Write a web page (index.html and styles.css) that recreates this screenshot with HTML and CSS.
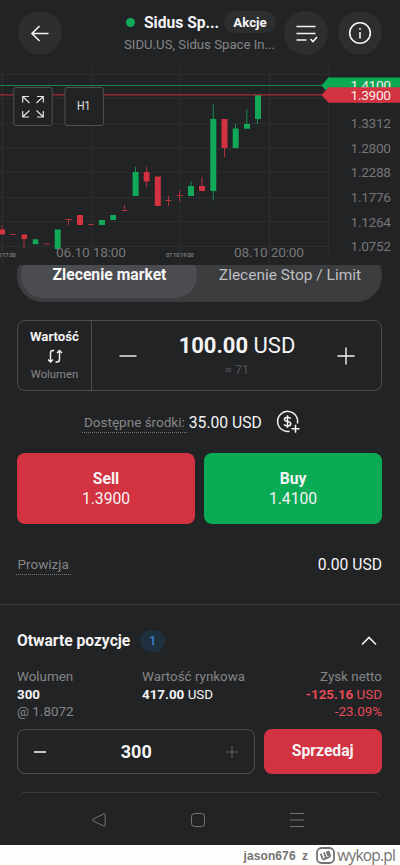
FILE: index.html
```html
<!DOCTYPE html>
<html lang="pl">
<head>
<meta charset="utf-8">
<title>Sidus Space</title>
<link rel="stylesheet" href="styles.css">
</head>
<body>
<div class="app">
  <header class="header">
    <div class="round"><svg width="44" height="44" viewBox="0 0 44 44"><path d="M30.500 22.500H14.500M21.500 15L14 22.500L21.500 30"/></svg></div>
    <div class="title">
      <div class="title-row"><i class="dot"></i><b class="name">Sidus Sp...</b><span class="tag">Akcje</span></div>
      <div class="sub">SIDU.US, Sidus Space In...</div>
    </div>
    <div class="round menu"><svg width="44" height="44" viewBox="0 0 44 44"><path d="M12.500 15.500H31.500M12.500 22.500H31.500M12.500 29H22.500M26.500 28L29 30.500L33 26"/></svg></div>
    <div class="round"><svg width="44" height="44" viewBox="0 0 44 44"><circle cx="22" cy="22" r="10.300"/><path d="M22 21V27.500M22 17V18.800"/></svg></div>
  </header>

  <svg class="chart" width="400" height="197" viewBox="0 68 400 197">
    <path class="grid" d="M0 74.500H329M0 98.500H329M0 123.500H329M0 148.500H329M0 172.500H329M0 197.500H329M0 221.500H329M0 246.500H329M2.500 68V265M91.500 68V265M180.500 68V265M269.500 68V265M328.500 68V252"/>
    <g class="dn">
      <path class="wick" d="M2 225V234M24 235V248M68.500 219V225M124.500 205V211M146.500 167V187M168.500 196V206M179.500 191V201M202 177V190M224.500 119V157M10 234.500H16M44 244H50M65.500 219.500H72M88 224.500H94M121.500 210.500H127.500M165.500 200.500H171.500M176.500 195.500H183"/>
      <path d="M-1 229.500h6v5h-6zM21.500 234.500h5.500v4.500h-5.500zM77 215h6v10h-6zM143.700 172h5.800v9.500h-5.800zM154.800 176.500h6v29.500h-6zM199 186h6v5h-6zM221.500 119h6v29h-6z"/>
    </g>
    <g class="up">
      <path class="wick" d="M135.500 167V175M191 181V187M213.300 104.500V200.500M235.500 124V130M246.800 109V126M257.500 118V124"/>
      <path d="M32.700 239.300h5.600v5h-5.600zM54.700 229.500h6v19.500h-6zM99 220h6v5h-6zM110.200 215h5.800v5h-5.800zM132.600 172h6v24h-6zM188 186h6v10h-6zM210.300 119h6v72h-6zM232.700 128.500h6v19.500h-6zM244 124h6v4.700h-6zM255 95h6v24h-6z"/>
    </g>
    <path d="M0 85.500H325" class="line-up"/><path d="M0 94.900H325" class="line-dn"/>
    <g class="box"><rect x="13.800" y="87.500" width="38.400" height="38" rx="2"/><rect x="65" y="87.500" width="38.400" height="38" rx="2"/></g>
    <path class="expand" d="M22.700 102.500V96.500H29M22.700 96.500L29.500 103M37 96.500H43.300V102.500M43.300 96.500L36.500 103M22.700 111V117H29M22.700 117L29.500 110.500M37 117H43.300V111M43.300 117L36.500 110.500"/>
    <text class="h1" x="77" y="110" textLength="13.500" lengthAdjust="spacingAndGlyphs">H1</text>
    <g class="axis">
      <text x="350.500" y="103.300" textLength="40.500">1.3824</text>
      <text x="350.500" y="128" textLength="40.500">1.3312</text>
      <text x="350.500" y="153" textLength="40.500">1.2800</text>
      <text x="350.500" y="177.300" textLength="40.500">1.2288</text>
      <text x="350.500" y="202.300" textLength="40.500">1.1776</text>
      <text x="350.500" y="226.500" textLength="40.500">1.1264</text>
      <text x="350.500" y="251.300" textLength="40.500">1.0752</text>
      <text x="56" y="256.500" textLength="70">06.10 18:00</text>
      <text x="234" y="256.500" textLength="70">08.10 20:00</text>
      <text class="tiny" x="-12" y="256.500" textLength="27.500">06.10 17:00</text>
      <text class="tiny" x="166" y="256.500" textLength="27.500">07.10 19:00</text>
    </g>
    <path class="flag-up" d="M321.500 85.500L328.500 77.500H400V93.500H328.500Z"/>
    <text class="price" x="350.500" y="90" textLength="40.500">1.4100</text>
    <path class="flag-dn" d="M321.500 95L328.500 87.300H400V102.700H328.500Z"/>
    <text class="price" x="350.500" y="99.700" textLength="40.500">1.3900</text>
  </svg>

  <section class="tabs-view">
    <div class="tabs"><b class="tab on">Zlecenie market</b><span class="tab">Zlecenie Stop / Limit</span></div>
  </section>

  <section class="amount">
    <div class="mode">
      <b>Wartość</b>
      <svg width="16" height="15" viewBox="0 0 16 15"><path d="M7.200 1.500H6Q3.500 1.500 3.500 4V13M1 10.500L3.500 13L6 10.500M8.500 13H10Q12.500 13 12.500 10.500V1.500M10 4L12.500 1.500L15 4"/></svg>
      <span>Wolumen</span>
    </div>
    <div class="stepper">
      <svg width="18" height="18" viewBox="0 0 18 18"><path d="M.5 9H17.500"/></svg>
      <div class="value"><div class="big"><b>100.00</b> USD</div><div class="approx">≈ 71</div></div>
      <svg width="18" height="18" viewBox="0 0 18 18"><path d="M.5 9H17.500M9 .5V17.500"/></svg>
    </div>
  </section>

  <section class="funds">
    <span class="hint">Dostępne środki:</span><span class="sum">35.00 USD</span>
    <svg width="24" height="24" viewBox="0 0 24 24"><path d="M13.500 21.200A10 10 0 1 1 21.400 13.500M19.500 14.800V22.800M15.500 18.800H23.500M14.700 8.600Q14 7.200 11.500 7.200Q8.500 7.200 8.500 9.300Q8.500 11.100 11.500 11.400Q14.800 11.800 14.800 13.800Q14.800 16 11.500 16Q8.800 16 8.200 14.200M11.500 5.300V17.900"/></svg>
  </section>

  <section class="deal">
    <div class="btn sell"><b>Sell</b><span>1.3900</span></div>
    <div class="btn buy"><b>Buy</b><span>1.4100</span></div>
  </section>

  <section class="fee"><span class="hint">Prowizja</span><span class="sum">0.00 USD</span></section>

  <section class="positions">
    <div class="pos-head"><b>Otwarte pozycje</b><span class="count">1</span>
      <svg width="16" height="10" viewBox="0 0 16 10"><path d="M1 8.500L8 1.500L15 8.500"/></svg></div>
    <div class="stats">
      <div class="c1"><div>Wolumen</div><div class="w"><b>300</b></div><div class="at">@ 1.8072</div></div>
      <div class="c2"><div>Wartość rynkowa</div><div class="w"><b>417.00</b> USD</div></div>
      <div class="c3"><div>Zysk netto</div><div class="loss"><b>-125.16</b> USD</div><div class="loss">-23.09%</div></div>
    </div>
    <div class="close-row">
      <div class="qty">
        <svg width="12" height="12" viewBox="0 0 12 12"><path d="M0 6H12"/></svg><b>300</b>
        <svg class="dim" width="12" height="12" viewBox="0 0 12 12"><path d="M0 6H12M6 0V12"/></svg>
      </div>
      <div class="close">Sprzedaj</div>
    </div>
    <div class="next"><div class="next-card"></div></div>
  </section>

  <nav class="nav">
    <svg width="14" height="14" viewBox="0 0 14 14"><path d="M12 .7Q13.200 .5 13.200 1.800V12.200Q13.200 13.500 12 13.200L1 7.800Q.3 7 1 6.200Z"/></svg>
    <svg width="14" height="14" viewBox="0 0 14 14"><rect x=".5" y=".5" width="13" height="13" rx="3"/></svg>
    <svg width="14" height="14" viewBox="0 0 14 14"><path d="M0 .5H14M0 7H14M0 13.500H14"/></svg>
  </nav>
</div>
<footer class="credit">
  <span class="author">jason676 z</span>
  <svg width="19" height="17" viewBox="0 0 19 17"><rect x="1" y="1" width="17" height="15" rx="4.500"/><path d="M4.800 6.800L6.500 11.500Q7 12.700 8.200 12.200L13.300 10Q14.400 9.500 14 8.300L12.300 3.800M8 5.500L9.800 10.500M10.700 4.500L12.300 9"/></svg>
  <span class="brand">wykop.pl</span>
</footer>
</body>
</html>
```
FILE: styles.css
```css
* { box-sizing: border-box; }
body { margin: 0; width: 400px; height: 865px; overflow: hidden; background: #fefefc; font-family: Roboto, "Liberation Sans", sans-serif; color: #f4f4f5; }
svg { display: block; flex: none; fill: none; stroke: #f4f4f5; stroke-width: 1.6; }
.app { height: 845px; background: #222325; overflow: hidden; }

.header { height: 68px; display: flex; align-items: center; padding: 0 18px 2px 17.5px; }
.round { width: 44px; height: 44px; border-radius: 50%; background: #2d2e30; flex: none; }
.menu { margin-right: 10px; }
.title { width: 152px; margin: 0 8px 0 auto; white-space: nowrap; }
.title-row { display: flex; align-items: center; height: 22px; }
.dot { width: 9px; height: 9px; border-radius: 50%; background: #10a958; margin: 0 9px 0 2px; flex: none; }
.name { font-size: 15.6px; width: 73px; padding-top: 1px; }
.tag { margin-left: 7px; width: 52px; height: 22px; border-radius: 11px; background: #2d2e30; font-size: 13.3px; font-weight: 700; line-height: 23px; text-align: center; flex: none; }
.sub { font-size: 13.2px; line-height: 20px; color: #858688; padding-top: 2px; }

.chart text { fill: #747577; stroke: none; font-size: 13.7px; }
.grid { stroke: #2c2d2f; stroke-width: 1; }
.dn { fill: #d33340; stroke: none; }
.up { fill: #11a857; stroke: none; }
.wick { stroke-width: 1; opacity: .8; }
.dn .wick { stroke: #d33340; }
.up .wick { stroke: #11a857; }
.line-up { stroke: #178848; stroke-width: 1.1; }
.line-dn { stroke: #a62c37; stroke-width: 1.2; }
.box { fill: #222325; stroke: #505153; stroke-width: 1; }
.expand { stroke: #e4e4e5; stroke-width: 1.2; }
.chart .h1 { fill: #e4e4e5; font-size: 12px; }
.chart .tiny { font-size: 5.5px; fill: #a0a0a0; }
.chart .price { fill: #f7e9ea; }
.flag-up { fill: #0aaa54; stroke: none; }
.flag-dn { fill: #d33340; stroke: none; }

.tabs-view { height: 37px; padding: 0 18px 0 17px; overflow: hidden; }
.tabs { display: flex; height: 52.5px; margin-top: -16px; padding: 4px; border-radius: 26px; background: #3c3d3f; }
.tab { flex: 1; font-size: 15.5px; line-height: 44px; text-align: center; color: #bebfc1; white-space: nowrap; padding-left: 5px; }
.tab.on { flex: none; width: 176px; background: #4b4c4f; border-radius: 22px; font-size: 15.7px; color: #f6f6f7; padding-left: 1px; }

.amount { display: flex; margin: 18px 18px 0 17px; height: 71px; border: 1px solid #4b4c4e; border-radius: 8px; }
.mode { width: 74px; border-right: 1px solid #4b4c4e; display: flex; flex-direction: column; align-items: center; font-size: 13.2px; line-height: 16px; padding-top: 8px; }
.mode b { margin-bottom: 4px; }
.mode svg { stroke-width: 1.4; }
.mode span { color: #858688; font-size: 11.3px; margin-top: 3px; }
.stepper { flex: 1; display: flex; justify-content: space-between; align-items: center; padding: 0 26px 0 27px; }
.stepper svg { stroke-width: 1.4; }
.value { text-align: center; }
.big { font-size: 22px; line-height: 26px; }
.approx { font-size: 12.3px; line-height: 16px; margin-top: 3px; color: #55565a; }

.funds { display: flex; align-items: center; height: 24px; margin-top: 19px; padding-left: 82px; }
.hint { color: #858688; font-size: 13.5px; height: 20px; line-height: 19px; padding: 0 2px; border-bottom: 1px dotted #77787a; white-space: nowrap; }
.sum { font-size: 15.7px; white-space: nowrap; }
.funds .hint { margin: 1px 2px 0 0; }
.funds svg { margin-left: 14px; stroke-width: 1.5; }

.deal { display: flex; gap: 9px; margin: 19px 18px 0 17px; }
.btn { flex: 1; height: 71px; border-radius: 8px; display: flex; flex-direction: column; align-items: center; justify-content: center; line-height: 20px; font-size: 15.7px; }
.sell { background: #d33240; }
.buy { background: #0baa55; }

.fee { display: flex; justify-content: space-between; align-items: center; height: 81px; padding: 0 18px 0 15.5px; border-bottom: 1px solid #3c3d3f; }
.fee .hint { margin-top: 1px; }

.positions { padding: 25px 18px 0 17px; }
.pos-head { display: flex; align-items: center; height: 22px; font-size: 15.6px; }
.count { width: 25px; height: 22px; border-radius: 11px; background: #1f303f; color: #3983ce; font-size: 13px; font-weight: 500; text-align: center; line-height: 22px; margin-left: 10px; }
.pos-head svg { margin-left: auto; margin-right: 5.5px; }
.stats { display: flex; margin-top: 16px; height: 54px; line-height: 17.6px; font-size: 13.4px; color: #858688; white-space: nowrap; }
.c1 { width: 125px; }
.c3 { margin-left: auto; text-align: right; }
.w { color: #f4f4f5; }
.loss { color: #e64b57; }
.close-row { display: flex; gap: 9px; margin-top: 7px; }
.qty { width: 237.5px; height: 45px; border: 1px solid #4b4c4e; border-radius: 8px; display: flex; align-items: center; justify-content: space-between; padding: 0 15px 0 16px; font-size: 18px; }
.qty .dim { stroke: #5a5b5d; stroke-width: 1.2; }
.close { flex: 1; border-radius: 8px; background: #d33240; font-weight: 700; font-size: 15.7px; line-height: 44px; text-align: center; }
.next { height: 4px; margin-top: 18px; overflow: hidden; }
.next-card { height: 30px; border: 1px solid #3b3c3e; border-radius: 8px; }

.nav { display: flex; gap: 85px; padding: 17px 0 0 92px; }
.nav svg { stroke: #737476; stroke-width: 1; }

.credit { height: 20px; display: flex; align-items: center; justify-content: flex-end; padding-right: 5px; color: #737373; white-space: nowrap; }
.author { font: bold 12px "Liberation Sans", sans-serif; letter-spacing: .1px; word-spacing: 3px; margin-right: 8px; padding-top: 1px; }
.credit svg { stroke: #737373; stroke-width: 1.8; }
.brand { font: 15.5px/18px "Open Sans", sans-serif; letter-spacing: -.8px; margin-left: 2px; }
```
